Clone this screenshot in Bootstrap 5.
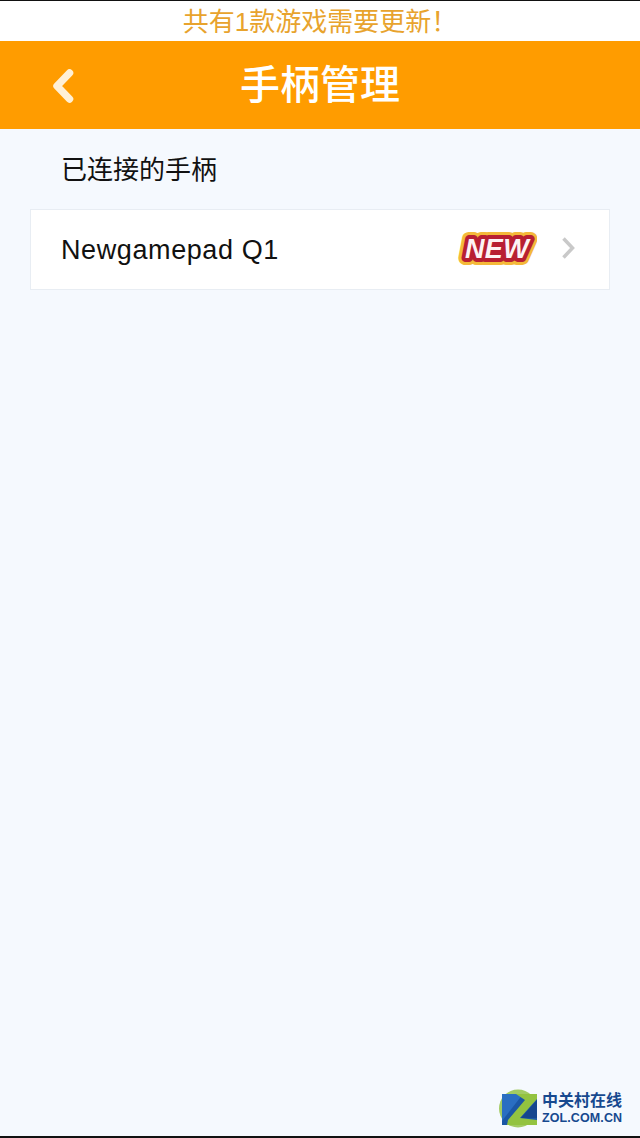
<!DOCTYPE html>
<html lang="zh">
<head>
<meta charset="utf-8">
<title>手柄管理</title>
<link href="https://cdn.jsdelivr.net/npm/bootstrap@5.3.0/dist/css/bootstrap.min.css" rel="stylesheet">
<style>
html,body{height:100%;margin:0}
body{background:#f5f9fe;font-family:"Liberation Sans","Noto Sans CJK SC",sans-serif;color:#111}
.screen{width:640px;height:1138px;overflow:hidden;position:relative;border-top:1px solid #111;border-bottom:2px solid #111}
.notice{height:40px;background:#fff;color:#e8a32d;font-size:26px;line-height:43px}
.titlebar{height:88px;background:#ff9c00;color:#fff;position:relative}
.titlebar h1{font-size:40px;font-weight:500;margin:0;line-height:88px}
.backbtn{position:absolute;left:50px;top:27px;width:26px;height:36px}
.sect{padding:25px 0 0 61px;font-size:26px;line-height:32px;height:80px}
.devrow{margin:0 30px;height:81px;background:#fff;border:1px solid #e8edf3;padding-left:30px;padding-right:34px;font-size:27px;letter-spacing:.6px}
.devname{padding-top:1px}
.newtag{margin-right:24px;margin-bottom:3px}
.newtag text{font:italic 700 27px "Liberation Sans",sans-serif;letter-spacing:.4px;stroke-linejoin:round}
.chev{margin-bottom:3px}
.zlogo{position:absolute;left:499px;top:1088px;display:flex;gap:4px;align-items:center}
.zname{color:#17498f;font-weight:700;line-height:1}
.zcn{font-size:16px}
.zen{font-size:12.500px;margin-top:3px;letter-spacing:.1px}
</style>
</head>
<body>
<div class="screen">
  <div class="notice text-center">共有1款游戏需要更新！</div>
  <div class="titlebar text-center">
    <svg class="backbtn" viewBox="0 0 26 36" aria-hidden="true"><path d="M19.500 5 7 18l12.500 13" fill="none" stroke="#fff0d6" stroke-width="7.500" stroke-linecap="round" stroke-linejoin="round"/></svg>
    <h1>手柄管理</h1>
  </div>
  <div class="sect">已连接的手柄</div>
  <div class="devrow d-flex align-items-center">
    <span class="devname flex-grow-1">Newgamepad Q1</span>
    <svg class="newtag" width="80" height="36" viewBox="0 0 80 36" role="img" aria-label="NEW">
      <defs><text id="newword" x="40" y="27.500" text-anchor="middle">NEW</text></defs>
      <use href="#newword" fill="#f4b93a" stroke="#f4b93a" stroke-width="14"/>
      <use href="#newword" fill="#b81f32" stroke="#b81f32" stroke-width="8"/>
      <text x="40" y="27.500" text-anchor="middle" fill="#fdf3f4">NEW</text>
    </svg>
    <svg class="chev" width="14" height="24" viewBox="0 0 14 24" aria-hidden="true"><path d="M2.500 2.500 11.500 12l-9 9.500" fill="none" stroke="#c9c9c9" stroke-width="3.500"/></svg>
  </div>
  <div class="zlogo">
    <svg width="39" height="39" viewBox="0 0 39 39" aria-hidden="true">
      <circle cx="19" cy="19.500" r="19" fill="#a3cb63"/>
      <path d="M3 5h35v31H3z" fill="#1b57a5"/>
      <path d="M3 5h21L3 32z" fill="#2a6ec2"/>
      <path d="M38 11v18H22z" fill="#15468e"/>
      <path d="M17 5h21v5L21 29l17 2v5H8l1-5 17-20z" fill="#93c340"/>
    </svg>
    <div class="zname">
      <div class="zcn">中关村在线</div>
      <div class="zen">ZOL.COM.CN</div>
    </div>
  </div>
</div>
</body>
</html>
